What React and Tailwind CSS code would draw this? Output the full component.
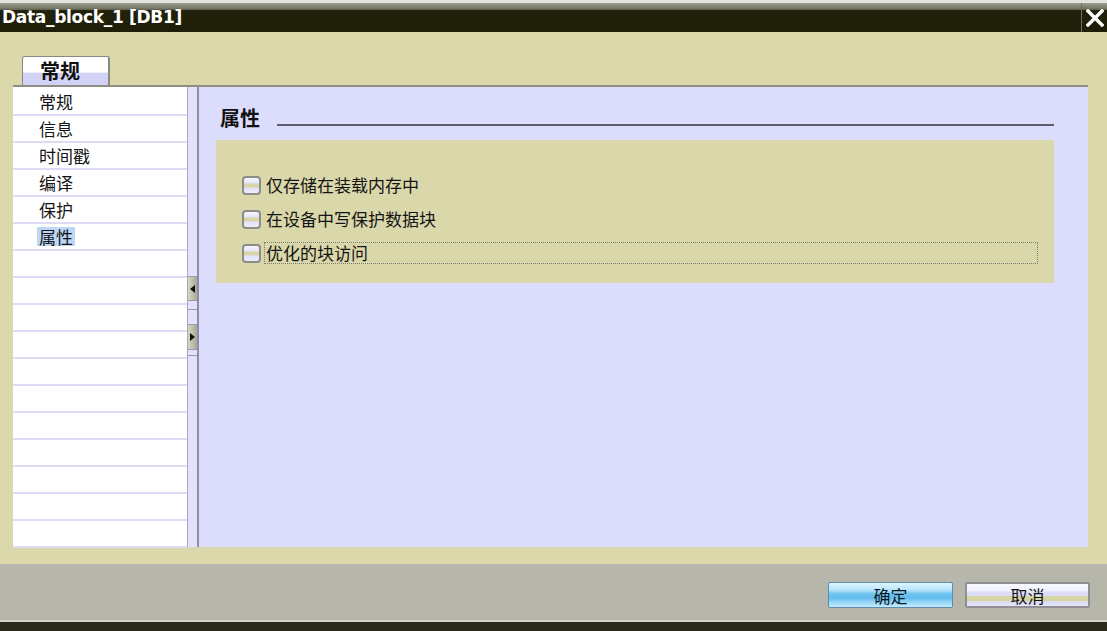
import React from "react";

function CheckRow({ label, focused }) {
  return (
    <div className="h-[34px] flex items-center">
      <div className="w-[19px] h-[19px] shrink-0 rounded-[4px] border-2 border-[#8c8c88] bg-[linear-gradient(to_bottom,#f6f6ff_0%,#e6e6fa_30%,#d6d6a6_42%,#d6d6a6_58%,#e2e2f8_68%,#ececfc_100%)]" />
      <div
        className={
          "ml-[3px] flex-1 mr-[16px] h-[22px] flex items-center pl-[1px] border " +
          (focused ? "border-dotted border-[#7c7c70]" : "border-transparent")
        }
      >
        <span className="text-[17px] leading-[20px] text-[#141414]">{label}</span>
      </div>
    </div>
  );
}

export default function App() {
  const items = ["常规", "信息", "时间戳", "编译", "保护", "属性"];
  const rows = Array.from({ length: 17 }, (_, i) => items[i] || "");
  return (
    <div className="w-[1107px] h-[631px] overflow-hidden flex flex-col bg-[#dbd9ab] font-['Noto_Sans_CJK_SC',sans-serif]">
      {/* strip of window behind */}
      <div className="h-[3px] bg-[#e2e2de]" />
      {/* title bar */}
      <div className="h-[29px] flex items-stretch bg-[linear-gradient(to_bottom,#9e9e92_0%,#6c6c5c_22%,#22220c_26%,#1e1e08_100%)]">
        <div className="flex-1 flex items-center pl-[2px]">
          <span className="font-['DejaVu_Sans',sans-serif] font-bold text-[17px] tracking-[-0.3px] leading-none text-white">
            Data_block_1 [DB1]
          </span>
        </div>
        <div className="w-[26px] border-l border-[#6e6e64] flex items-center justify-center">
          <svg width="18" height="18" viewBox="0 0 18 18">
            <path d="M2 2 L16 16 M16 2 L2 16" stroke="#ffffff" strokeWidth="3.4" strokeLinecap="square" />
          </svg>
        </div>
      </div>

      {/* body */}
      <div className="h-[532px] flex flex-col pl-[13px] pr-[19px] pt-[24px]">
        {/* tab */}
        <div className="h-[29px] flex">
          <div className="ml-[9px] w-[88px] h-[29px] rounded-t-[3px] border border-b-0 border-[#8a8a80] border-r-2 bg-[linear-gradient(to_bottom,#ffffff_0%,#ffffff_55%,#d2d2f6_56%,#d2d2f6_100%)] flex items-center pl-[17px]">
            <span className="text-[20px] font-bold leading-none text-[#101010]">常规</span>
          </div>
        </div>
        <div className="h-[2px] bg-[#8e8e80]" />
        {/* panel */}
        <div className="h-[460px] flex">
          {/* left list */}
          <div className="w-[175px] bg-white pt-[2px] border-r border-[#a8a8c4]">
            {rows.map((t, i) => (
              <div key={i} className="h-[27px] border-b-2 border-[#dcdcf4] flex items-center pl-[24px]">
                {t && (
                  <span
                    className={
                      "text-[17px] leading-[19px] px-[2px] text-[#141414] " + (t === "属性" ? "bg-[#bcd8f6]" : "")
                    }
                  >
                    {t}
                  </span>
                )}
              </div>
            ))}
          </div>
          {/* splitter */}
          <div className="w-[11px] bg-[#e2e2fc] border-r-2 border-[#8e8ea8] flex flex-col">
            <div className="h-[189px]" />
            <div className="h-[25px] border-y border-[#9a9ab0] bg-[linear-gradient(to_right,#d8d8c0,#a8a894)] flex items-center justify-center">
              <svg width="5" height="8" viewBox="0 0 5 8">
                <path d="M5 0 L0 4 L5 8 Z" fill="#111" />
              </svg>
            </div>
            <div className="h-[9px] border-b border-[#9a9ab0]" />
            <div className="h-[14px]" />
            <div className="h-[26px] border-y border-[#9a9ab0] bg-[linear-gradient(to_right,#d8d8c0,#a8a894)] flex items-center justify-center">
              <svg width="5" height="8" viewBox="0 0 5 8">
                <path d="M0 0 L5 4 L0 8 Z" fill="#111" />
              </svg>
            </div>
            <div className="h-[6px] border-b border-[#9a9ab0]" />
          </div>
          {/* content */}
          <div className="flex-1 bg-[#dcdcfc] pl-[17px] pr-[34px] pt-[19px] flex flex-col">
            <div className="h-[24px] flex items-end pl-[4px]">
              <span className="text-[20px] font-bold leading-[24px] text-[#101010]">属性</span>
              <div className="flex-1 ml-[17px] mb-[4px] h-[2px] bg-[#5c5c6c]" />
            </div>
            <div className="mt-[10px] h-[143px] bg-[#dad8aa] pl-[26px] pt-[28px]">
              <CheckRow label="仅存储在装载内存中" />
              <CheckRow label="在设备中写保护数据块" />
              <CheckRow label="优化的块访问" focused />
            </div>
          </div>
        </div>
      </div>

      {/* footer */}
      <div className="h-[56px] bg-[#b6b6aa] flex items-start justify-end pr-[17px] pt-[18px] gap-[12px]">
        <div className="w-[125px] h-[26px] rounded-[2px] border border-[#5c8cb0] bg-[linear-gradient(to_bottom,#e0f6ff_0%,#b4e4fa_30%,#70c4f0_45%,#62bcee_62%,#96d6f6_80%,#c4ecfc_100%)] flex items-center justify-center">
          <span className="text-[17px] leading-none text-[#0c1a28]">确定</span>
        </div>
        <div className="w-[125px] h-[26px] rounded-[2px] border-2 border-[#909094] bg-[linear-gradient(to_bottom,#f8f8ff_0%,#f2f2ff_30%,#dcdcf8_38%,#dcdcf8_52%,#d6d6a2_56%,#d6d6a2_76%,#dcdcf8_80%,#e4e4fc_100%)] flex items-center justify-center">
          <span className="text-[17px] leading-none text-[#141414]">取消</span>
        </div>
      </div>
      <div className="h-[2px] bg-[#d4d4cc]" />
      <div className="flex-1 bg-[#2a2a1c]" />
    </div>
  );
}
